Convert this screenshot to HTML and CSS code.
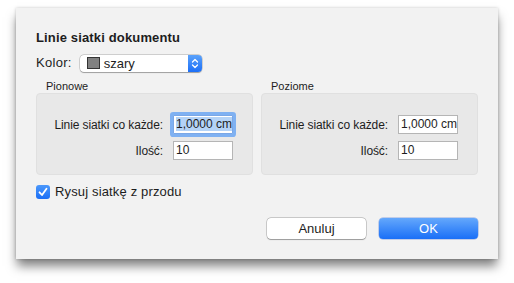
FILE: index.html
```html
<!DOCTYPE html>
<html lang="pl">
<head>
<meta charset="utf-8">
<link rel="stylesheet" href="styles.css">
</head>
<body>
<div class="page">
<div class="dialog">
  <div class="title">Linie siatki dokumentu</div>
  <div class="color-row">
    <span class="lbl13 kolor">Kolor:</span>
    <div class="popup">
      <span class="swatch"></span>
      <span class="popup-text">szary</span>
      <span class="stepper">
        <svg width="14" height="17" viewBox="0 0 14 17"><path d="M4.5 7 L7 4.5 L9.5 7 M4.5 10 L7 12.5 L9.5 10" fill="none" stroke="#fff" stroke-width="1.3" stroke-linecap="round" stroke-linejoin="round"/></svg>
      </span>
    </div>
  </div>
  <div class="groups">
    <div class="group">
      <div class="group-label">Pionowe</div>
      <div class="box">
        <div class="frow"><span class="flabel">Linie siatki co każde:</span><div class="field focused"><span class="sel">1,0000 cm</span></div></div>
        <div class="frow"><span class="flabel">Ilość:</span><div class="field">10</div></div>
      </div>
    </div>
    <div class="group">
      <div class="group-label">Poziome</div>
      <div class="box">
        <div class="frow"><span class="flabel">Linie siatki co każde:</span><div class="field">1,0000 cm</div></div>
        <div class="frow"><span class="flabel">Ilość:</span><div class="field">10</div></div>
      </div>
    </div>
  </div>
  <div class="check-row">
    <span class="checkbox"><svg width="14" height="14" viewBox="0 0 14 14"><path d="M3.5 7.3 L6 10 L10.5 3.8" fill="none" stroke="#fff" stroke-width="1.8" stroke-linecap="round" stroke-linejoin="round"/></svg></span>
    <span class="lbl13 check-text">Rysuj siatkę z przodu</span>
  </div>
  <div class="buttons">
    <div class="btn">Anuluj</div>
    <div class="btn primary">OK</div>
  </div>
</div>
</div>
</body>
</html>
```
FILE: styles.css
```css
html, body { margin: 0; padding: 0; background: #fff; }
body { font-family: "Liberation Sans", Arial, sans-serif; color: #1d1d1d; }
.page { height: 283px; padding-top: 8px; box-sizing: border-box; }
.dialog {
  margin: 0 0 0 16px;
  width: 482px;
  height: 251px;
  box-sizing: border-box;
  padding: 22px 20px 0 20px;
  background: #f2f2f2;
  box-shadow: 0 8px 10px -1px rgba(0,0,0,0.5), 0 0 3px rgba(0,0,0,0.2);
  display: flex;
  flex-direction: column;
}
.title { font-size: 13px; font-weight: bold; line-height: 16px; height: 16px; letter-spacing: 0.15px; }
.color-row { margin-top: 8px; display: flex; align-items: center; height: 18px; gap: 8px; }
.lbl13 { font-size: 13px; line-height: 16px; }
.kolor { letter-spacing: 0.3px; }
.check-text { letter-spacing: 0.15px; }
.popup {
  width: 122px; height: 17px; box-sizing: border-box;
  background: #fff; border-radius: 4px;
  box-shadow: 0 0 0 0.5px rgba(0,0,0,0.25), 0 0.5px 1px rgba(0,0,0,0.25);
  display: flex; align-items: center; overflow: hidden;
}
.swatch { width: 11px; height: 10px; margin-left: 7px; background: #808080; border: 1px solid #333; }
.popup-text { font-size: 13px; margin-left: 4px; flex: 1; line-height: 17px; }
.stepper {
  width: 14px; height: 17px; display: flex;
  background: linear-gradient(#5ba2fb, #1c6ff7);
}
.groups { display: flex; gap: 8px; margin-top: 7px; }
.group { flex: 1; display: flex; flex-direction: column; }
.group-label { font-size: 11px; line-height: 14px; height: 14px; padding-left: 10px; }
.box {
  height: 82px; box-sizing: border-box;
  background: #e8e8e8; border: 1px solid #e0e0e0; border-radius: 4px;
  padding: 21px 19px 0 0;
  display: flex; flex-direction: column; gap: 7px;
}
.frow { display: flex; justify-content: flex-end; align-items: center; gap: 10px; height: 19px; }
.flabel { font-size: 12px; letter-spacing: -0.1px; }
.field {
  width: 60px; height: 19px; box-sizing: border-box;
  background: #fff; border: 1px solid #b5b5b5;
  font-size: 12px; line-height: 17px; padding-left: 2px;
  white-space: nowrap; overflow: hidden;
}
.field.focused {
  border-color: #7aa7e6;
  box-shadow: 0 0 0 3px #7fb1f2;
  border-radius: 1px;
}
.sel { background: #b4d3f7; }
.check-row { margin-top: 10px; display: flex; align-items: center; gap: 5px; height: 14px; }
.checkbox {
  width: 14px; height: 14px; border-radius: 3px;
  background: linear-gradient(#4c98fb, #1b6ff6);
  display: flex;
}
.buttons { margin-top: 19px; display: flex; justify-content: flex-end; gap: 13px; }
.btn {
  width: 99px; height: 21px; box-sizing: border-box;
  border-radius: 4px; background: #fff;
  box-shadow: 0 0 0 0.5px rgba(0,0,0,0.3), 0 0.5px 1px rgba(0,0,0,0.25);
  font-size: 13px; line-height: 21px; text-align: center;
}
.btn.primary {
  background: linear-gradient(#64a8fc, #1a6ff7);
  color: #fff;
  box-shadow: 0 0 0 0.5px rgba(0,60,200,0.4);
}
```
